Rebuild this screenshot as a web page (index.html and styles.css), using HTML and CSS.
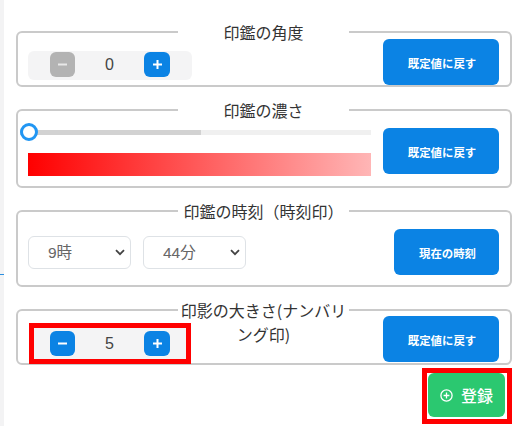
FILE: index.html
```html
<!DOCTYPE html>
<html lang="ja">
<head>
<meta charset="utf-8">
<title>印鑑の設定</title>
<link rel="stylesheet" href="styles.css">
</head>
<body>
<div class="shell">
  <div class="strip"><div class="strip-line"></div></div>
  <main class="main">
    <fieldset class="group group-tight">
      <legend class="legend">印鑑の角度</legend>
      <div class="row row-up5">
        <div class="stepper">
          <button class="step step-off" type="button"><svg width="9" height="9" viewBox="0 0 9 9"><rect x="0" y="3.5" width="9" height="2" fill="currentColor"/></svg></button>
          <span class="step-value">0</span>
          <button class="step step-plus" type="button"><svg width="9" height="9" viewBox="0 0 9 9"><path d="M0 3.5h3.5V0h2v3.5H9v2H5.5V9h-2V5.5H0z" fill="currentColor"/></svg></button>
        </div>
        <button class="action" type="button">既定値に戻す</button>
      </div>
    </fieldset>

    <fieldset class="group group-loose">
      <legend class="legend">印鑑の濃さ</legend>
      <div class="row row-end">
        <div class="density">
          <input class="slider" type="range" min="0" max="100" value="0">
          <div class="shade"></div>
        </div>
        <button class="action action-low" type="button">既定値に戻す</button>
      </div>
    </fieldset>

    <fieldset class="group group-loose">
      <legend class="legend">印鑑の時刻（時刻印）</legend>
      <div class="row row-time">
        <div class="selects">
          <select class="select"><option>9時</option></select>
          <select class="select"><option>44分</option></select>
        </div>
        <button class="action action-narrow" type="button">現在の時刻</button>
      </div>
    </fieldset>

    <fieldset class="group group-tight group-last">
      <legend class="legend">印影の大きさ(ナンバリング印)</legend>
      <div class="row row-up6">
        <div class="stepper stepper-marked">
          <button class="step" type="button"><svg width="9" height="9" viewBox="0 0 9 9"><rect x="0" y="3.5" width="9" height="2" fill="currentColor"/></svg></button>
          <span class="step-value">5</span>
          <button class="step step-plus" type="button"><svg width="9" height="9" viewBox="0 0 9 9"><path d="M0 3.5h3.5V0h2v3.5H9v2H5.5V9h-2V5.5H0z" fill="currentColor"/></svg></button>
        </div>
        <button class="action" type="button">既定値に戻す</button>
      </div>
    </fieldset>

    <div class="footer">
      <div class="marker">
        <button class="submit" type="button">
          <svg width="13" height="13" viewBox="0 0 13 13" fill="none" stroke="currentColor" stroke-width="1.3"><circle cx="6.5" cy="6.5" r="5.6"/><path d="M6.5 3.6v5.8M3.6 6.5h5.8"/></svg>
          <span>登録</span>
        </button>
      </div>
    </div>
  </main>
</div>
</body>
</html>
```

FILE: styles.css
```css
* { box-sizing: border-box; }

html, body {
  margin: 0;
  height: 100%;
  background: #fff;
  overflow: hidden;
}

body {
  font-family: "Noto Sans CJK JP", "Liberation Sans", sans-serif;
  color: #333;
}

.shell {
  display: flex;
  height: 426px;
}

.strip {
  width: 4px;
  background: #f3f3f4;
  padding-top: 274px;
}

.strip-line {
  height: 1px;
  background: #2b8fe0;
}

.main {
  width: 496px;
  margin-left: 12px;
  padding-top: 20px;
}

.group {
  margin: 0 0 11px;
  padding: 0 11px 0 10px;
  min-width: 0;
  border: 2px solid #cacaca;
  border-radius: 6px;
}

.group-tight { padding-bottom: 0; }
.group-loose { padding-bottom: 10px; }
.group-last { margin-bottom: 3px; padding-bottom: 1px; }

.legend {
  width: 171px;
  height: 24px;
  margin: 0 auto;
  padding: 0;
  font-size: 16px;
  line-height: 24px;
  text-align: center;
  color: #333;
}

.row {
  display: flex;
  justify-content: space-between;
  align-items: flex-start;
}

.row-up5 { margin-top: -5px; height: 46px; }
.row-up6 { margin-top: -6px; height: 46px; }
.row-end { align-items: flex-end; }
.row-time { align-items: center; margin-top: 6px; }

.stepper {
  display: flex;
  align-items: center;
  width: 164px;
  height: 29px;
  margin-top: 12px;
  padding: 0 22px 2px;
  background: #f4f4f5;
  border-radius: 6px;
}

.stepper-marked {
  width: 162px;
  height: 41px;
  margin: 7px 0 0 1px;
  padding: 0 16px;
  border: 5px solid #f00;
  border-radius: 0;
}

.step {
  display: flex;
  align-items: center;
  justify-content: center;
  width: 25px;
  height: 25px;
  padding: 0;
  border: 0;
  border-radius: 6px;
  background: #0b83e4;
  color: #fff;
}

.step-plus { width: 26px; }

.step-off {
  background: #b3b3b3;
  color: #e8e8e8;
}

.step-value {
  flex: 1;
  text-align: center;
  font-family: "Liberation Sans", sans-serif;
  font-size: 16px;
  color: #444;
}

.action {
  flex: none;
  width: 116px;
  height: 46px;
  padding: 2px 0 0 2px;
  border: 0;
  border-radius: 6px;
  background: #0b83e4;
  color: #fff;
  font-family: inherit;
  font-size: 11.4px;
  font-weight: 700;
}

.action-low { margin-bottom: 2px; }
.action-narrow { width: 105px; }

.density {
  display: flex;
  flex-direction: column;
  width: 343px;
}

.slider {
  appearance: none;
  -webkit-appearance: none;
  display: block;
  width: 351px;
  height: 18px;
  margin: 1px 0 0 -8px;
  padding: 0;
  background: transparent;
}

.slider::-webkit-slider-runnable-track {
  height: 5px;
  background: linear-gradient(to right, #d2d2d2 0, #d2d2d2 181px, #f0f0f0 181px);
}

.slider::-webkit-slider-thumb {
  -webkit-appearance: none;
  width: 18px;
  height: 18px;
  margin-top: -6.5px;
  border: 3px solid #2196f3;
  border-radius: 50%;
  background: #fff;
}

.shade {
  height: 23px;
  margin-top: 12px;
  background: linear-gradient(to right, #f00, #ffb6b6);
}

.selects {
  display: flex;
  gap: 12px;
}

.select {
  appearance: none;
  -webkit-appearance: none;
  width: 103px;
  height: 33px;
  padding: 0 0 0 19px;
  border: 1px solid #dee2e6;
  border-radius: 6px;
  background: #fff url("data:image/svg+xml,%3Csvg xmlns='http://www.w3.org/2000/svg' width='10' height='7' viewBox='0 0 10 7'%3E%3Cpath d='M1 1.2l4 4 4-4' fill='none' stroke='%23444' stroke-width='1.8'/%3E%3C/svg%3E") no-repeat right 5px center;
  color: #666;
  font-family: "Liberation Sans", "Noto Sans CJK JP", sans-serif;
  font-size: 15.5px;
}

.footer {
  display: flex;
  justify-content: flex-end;
}

.marker {
  width: 90px;
  height: 56px;
  padding: 0 2px 2px 1px;
  border: 5px solid #f00;
}

.submit {
  display: flex;
  align-items: center;
  justify-content: center;
  gap: 8px;
  width: 77px;
  height: 44px;
  padding: 0;
  border: 0;
  border-radius: 6px;
  background: #2bc870;
  color: #fff;
  font-family: inherit;
  font-size: 16px;
  font-weight: 500;
}
```
